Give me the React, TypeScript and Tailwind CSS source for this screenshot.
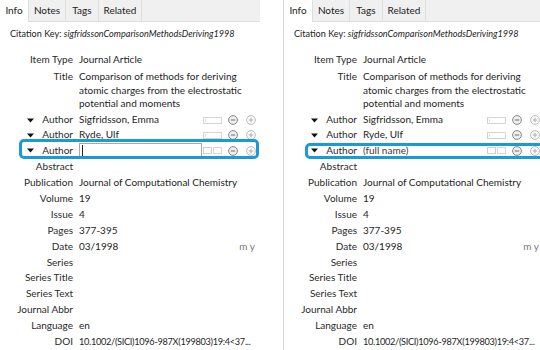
import React from "react";

const font = { fontFamily: "Lato, 'Open Sans', sans-serif" };

function Triangle() {
  return (
    <svg width="7" height="5" viewBox="0 0 7 5" className="shrink-0">
      <path d="M0 0.5 L7 0.5 L3.5 4.5 Z" fill="#111" />
    </svg>
  );
}

function ModeIcon({ split }: { split: boolean }) {
  if (split) {
    return (
      <div className="flex h-[7px] w-[19px] shrink-0 gap-[1px]">
        <div className="h-full w-[9px] border border-[#cfcfcf] bg-white" />
        <div className="h-full w-[9px] border border-[#d8d8d8] bg-white" />
      </div>
    );
  }
  return (
    <div className="h-[7px] w-[19px] shrink-0 border border-[#d4d4d4] bg-white">
      <div className="ml-[1px] mt-[1px] h-[3px] w-[1px] bg-[#e0e0e0]" />
    </div>
  );
}

function CircleIcon({ plus }: { plus?: boolean }) {
  const c = plus ? "#b5b5b5" : "#7a7a7a";
  return (
    <svg width="10" height="10" viewBox="0 0 10 10" className="shrink-0">
      <circle cx="5" cy="5" r="4.4" fill={plus ? "#fafafa" : "#efefef"} stroke={c} strokeWidth="0.9" />
      <path d="M2.8 5 H7.2" stroke={c} strokeWidth="1.1" />
      {plus && <path d="M5 2.8 V7.2" stroke={c} strokeWidth="1.1" />}
    </svg>
  );
}

function Row({ label, children, h = "h-[15.9px]" }: { label: string; children?: React.ReactNode; h?: string }) {
  return (
    <div className={`flex items-center ${h}`}>
      <div className="w-[73px] shrink-0 text-right text-[#2a2a2a]">{label}</div>
      <div className="flex min-w-0 flex-1 items-center pl-[6px] text-[#1e1e1e]">{children}</div>
    </div>
  );
}

function AuthorRow({ name, editing, split, h }: { name?: string; editing?: "input" | "placeholder"; split?: boolean; h: string }) {
  return (
    <div className={`flex items-center ${h}`}>
      <div className="flex w-[73px] shrink-0 items-center justify-end text-[#2a2a2a]">
        <div className="mr-auto pl-[27px]">
          <Triangle />
        </div>
        Author
      </div>
      <div className="flex flex-1 items-center pl-[6px] pr-[4px]">
        <div className="min-w-0 flex-1 whitespace-nowrap text-[#1e1e1e]">
          {editing === "input" ? (
            <div className="flex h-[15px] items-center border border-[#a8a8a8] bg-white">
              <div className="ml-[2px] h-[11px] w-[1px] bg-[#222]" />
            </div>
          ) : editing === "placeholder" ? (
            <span className="text-[#3a3a3a]">(full name)</span>
          ) : (
            name
          )}
        </div>
        <div className="ml-[1px]">
          <ModeIcon split={!!split} />
        </div>
        <div className="ml-[6px]">
          <CircleIcon />
        </div>
        <div className="ml-[8px]">
          <CircleIcon plus />
        </div>
      </div>
    </div>
  );
}

function Panel({ mode }: { mode: "input" | "placeholder" }) {
  const tabs = [
    { t: "Info", w: "w-[29px]" },
    { t: "Notes", w: "w-[37px]" },
    { t: "Tags", w: "w-[33px]" },
    { t: "Related", w: "w-[43px]" },
  ];
  return (
    <div className="relative h-full w-[261px] shrink-0 border-l border-[#d6d6d6] bg-white text-[10px] leading-[13.5px]">
      {/* Tabs */}
      <div className="flex h-[22px] bg-[#f0f0f0]">
        {tabs.map((tab, i) => (
          <div
            key={tab.t}
            className={`flex ${tab.w} items-center justify-center border-r border-[#dedede] text-[#222] ${
              i === 0 ? "bg-white" : "border-b"
            }`}
          >
            {tab.t}
          </div>
        ))}
        <div className="flex-1 border-b border-[#e2e2e2]" />
      </div>

      {/* Citation key */}
      <div className="mt-[4px] flex h-[16px] items-center whitespace-nowrap pl-[10px] text-[9.1px] text-[#222]">
        Citation Key:&nbsp;<span className="italic">sigfridssonComparisonMethodsDeriving1998</span>
      </div>

      <div className="mt-[10px]">
        <Row label="Item Type" h="h-[16px]">Journal Article</Row>
        <div className="flex py-[2px]">
          <div className="w-[73px] shrink-0 text-right text-[#2a2a2a]">Title</div>
          <div className="w-[172px] pl-[6px] text-[#1e1e1e]">
            Comparison of methods for deriving atomic charges from the electrostatic potential and moments
          </div>
        </div>
        <AuthorRow name="Sigfridsson, Emma" h="h-[15px]" />
        <AuthorRow name="Ryde, Ulf" h="h-[15px]" />
        <AuthorRow editing={mode} split h="h-[16.5px]" />
        <Row label="Abstract" />
        <Row label="Publication">Journal of Computational Chemistry</Row>
        <Row label="Volume">19</Row>
        <Row label="Issue">4</Row>
        <Row label="Pages">377-395</Row>
        <Row label="Date">
          <span className="flex-1">03/1998</span>
          <span className="pr-[5px] text-[#777]">m y</span>
        </Row>
        <Row label="Series" />
        <Row label="Series Title" />
        <Row label="Series Text" />
        <Row label="Journal Abbr" />
        <Row label="Language">en</Row>
        <Row label="DOI">
          <span className="whitespace-nowrap text-[9.2px] tracking-[-0.3px]">
            10.1002/(SICI)1096-987X(199803)19:4&lt;37...
          </span>
        </Row>
      </div>

      {/* highlight annotation */}
      {mode === "input" ? (
        <div className="pointer-events-none absolute left-[19px] top-[139px] h-[20px] w-[240px] rounded-[5px] border-[3px] border-[#1a9bd7]" />
      ) : (
        <div className="pointer-events-none absolute left-[21px] top-[143px] h-[16px] w-[240px] rounded-[5px] border-[3px] border-[#1a9bd7]" />
      )}
    </div>
  );
}

export default function App() {
  return (
    <div style={font} className="flex h-[350px] w-[540px] overflow-hidden bg-white">
      <div className="-ml-px flex">
        <Panel mode="input" />
      </div>
      <div className="ml-[23px] flex">
        <Panel mode="placeholder" />
      </div>
    </div>
  );
}
